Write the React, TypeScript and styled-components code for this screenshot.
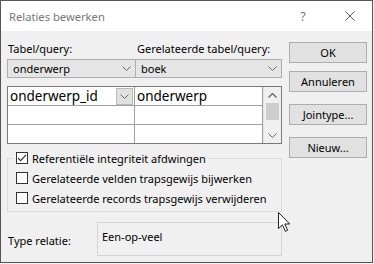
import React from "react";
import styled, { createGlobalStyle } from "styled-components";

const GlobalStyle = createGlobalStyle`
  html, body { margin: 0; padding: 0; background: #f3f3f3; }
  body { font-family: "Noto Sans", "Open Sans", sans-serif; }
  * { box-sizing: border-box; }
`;

const Window = styled.div`
  position: relative;
  width: 373px;
  height: 263px;
  border: 1px solid #555555;
  display: flex;
  flex-direction: column;
  background: #f0f0f0;
  font-family: "Noto Sans", sans-serif;
  font-size: 11px;
  color: #000;
`;

const TitleBar = styled.div`
  height: 30px;
  background: #ffffff;
  display: flex;
  align-items: center;
  padding-left: 8px;
`;

const Title = styled.div`
  flex: 1;
  font-size: 11.2px;
  color: #777777;
  padding-top: 1px;
`;

const HelpGlyph = styled.div`
  width: 12px;
  font-size: 12.5px;
  color: #777777;
  text-align: center;
  margin-right: 36px;
`;

const CloseButton = styled.div`
  width: 10px;
  height: 10px;
  margin-right: 17px;
  display: flex;
`;

const Body = styled.div`
  flex: 1;
  display: flex;
  padding: 10px 0 0 6px;
`;

const LeftColumn = styled.div`
  width: 275px;
  display: flex;
  flex-direction: column;
`;

const TwoCols = styled.div`
  display: grid;
  grid-template-columns: 129px 146px;
`;

const FieldLabel = styled.div<{ $indent?: number }>`
  height: 16px;
  line-height: 16px;
  padding-left: ${(p) => p.$indent ?? 1}px;
  white-space: nowrap;
`;

const ComboRow = styled(TwoCols)`
  margin-top: 2px;
`;

const Combo = styled.div`
  height: 19px;
  border: 1px solid #adadad;
  background: #e5e5e5;
  display: flex;
  align-items: center;
  padding: 0 4px;
  & + & {
    border-left: none;
  }
`;

const ComboText = styled.span`
  flex: 1;
  padding-left: 1px;
`;

const Chevron = ({ color = "#6a6a6a" }: { color?: string }) => (
  <svg width="9" height="5" viewBox="0 0 9 5">
    <polyline points="0.5,0.5 4.5,4.5 8.5,0.5" fill="none" stroke={color} strokeWidth="1" />
  </svg>
);

const ChevronUp = ({ color = "#606060" }: { color?: string }) => (
  <svg width="9" height="5" viewBox="0 0 9 5">
    <polyline points="0.5,4.5 4.5,0.5 8.5,4.5" fill="none" stroke={color} strokeWidth="1.2" />
  </svg>
);

const Table = styled.div`
  margin-top: 8px;
  border: 1px solid #7a7a7a;
  background: #ffffff;
  display: grid;
  grid-template-columns: 127px 128px 18px;
  grid-template-rows: 19px 19px 18px;
`;

const Cell = styled.div<{ $right?: boolean; $bottom?: boolean }>`
  border-right: ${(p) => (p.$right ? "1px solid #a0a0a0" : "none")};
  border-bottom: ${(p) => (p.$bottom ? "1px solid #a0a0a0" : "none")};
  display: flex;
  align-items: center;
  padding-left: 2px;
  font-size: 13.5px;
  white-space: nowrap;
  overflow: hidden;
`;

const CellText = styled.span`
  flex: 1;
`;

const CellDrop = styled.div`
  width: 17px;
  height: 17px;
  margin-right: 1px;
  background: #e1e1e1;
  border: 1px solid #b9b9b9;
  display: flex;
  align-items: center;
  justify-content: center;
`;

const ScrollBar = styled.div`
  grid-column: 3;
  grid-row: 1 / span 3;
  background: #f0f0f0;
  border-left: 1px solid #e4e4e4;
  display: flex;
  flex-direction: column;
  align-items: center;
`;

const ScrollArrow = styled.div`
  height: 16px;
  width: 100%;
  display: flex;
  align-items: center;
  justify-content: center;
`;

const ScrollThumb = styled.div`
  width: 13px;
  height: 17px;
  background: #cdcdcd;
`;

const ScrollTrack = styled.div`
  flex: 1;
`;

const GroupBox = styled.fieldset`
  margin: 7px 0 0 0;
  padding: 3px 0 3px 8px;
  border: 1px solid #dcdcdc;
  min-width: 0;
`;

const Legend = styled.legend`
  padding: 0 2px;
  margin-left: -2px;
  height: 14px;
  display: flex;
  align-items: center;
`;

const CheckRow = styled.label`
  height: 20px;
  display: flex;
  align-items: center;
  white-space: nowrap;
`;

const Box = styled.span`
  width: 12px;
  height: 12px;
  border: 1px solid #333333;
  background: #ffffff;
  margin-right: 4px;
  display: flex;
  flex: none;
`;

const CheckBox = ({ checked }: { checked?: boolean }) => (
  <Box>
    {checked && (
      <svg width="10" height="10" viewBox="0 0 10 10">
        <polyline points="1,5 3.6,7.6 9,2" fill="none" stroke="#333" strokeWidth="1.1" />
      </svg>
    )}
  </Box>
);

const TypeRow = styled.div`
  margin-top: 10px;
  display: flex;
  align-items: flex-start;
`;

const TypeLabel = styled.div`
  width: 90px;
  padding-left: 1px;
  margin-top: 11px;
  line-height: 16px;
`;

const TypeBox = styled.div`
  flex: 1;
  height: 34px;
  border: 1px solid #d5d5d5;
  padding: 6px 4px;
  line-height: 16px;
`;

const RightColumn = styled.div`
  width: 78px;
  margin-left: 7px;
  padding-top: 1px;
  display: flex;
  flex-direction: column;
`;

const Button = styled.div<{ $gap?: number }>`
  height: 21px;
  margin-top: ${(p) => p.$gap ?? 0}px;
  border: 1px solid #adadad;
  background: #e1e1e1;
  display: flex;
  align-items: center;
  justify-content: center;
`;

const Cursor = styled.svg`
  position: absolute;
  left: 277px;
  top: 211px;
`;

export default function App() {
  return (
    <>
      <GlobalStyle />
      <Window>
        <TitleBar>
          <Title>Relaties bewerken</Title>
          <HelpGlyph>?</HelpGlyph>
          <CloseButton>
            <svg width="10" height="10" viewBox="0 0 10 10">
              <line x1="0.5" y1="0.5" x2="9.5" y2="9.5" stroke="#555" strokeWidth="1" />
              <line x1="9.5" y1="0.5" x2="0.5" y2="9.5" stroke="#555" strokeWidth="1" />
            </svg>
          </CloseButton>
        </TitleBar>
        <Body>
          <LeftColumn>
            <TwoCols>
              <FieldLabel>Tabel/query:</FieldLabel>
              <FieldLabel $indent={1}>Gerelateerde tabel/query:</FieldLabel>
            </TwoCols>
            <ComboRow>
              <Combo>
                <ComboText>onderwerp</ComboText>
                <Chevron />
              </Combo>
              <Combo>
                <ComboText>boek</ComboText>
                <Chevron />
              </Combo>
            </ComboRow>
            <Table>
              <Cell $right $bottom>
                <CellText>onderwerp_id</CellText>
                <CellDrop>
                  <Chevron />
                </CellDrop>
              </Cell>
              <Cell $right $bottom>
                <CellText>onderwerp</CellText>
              </Cell>
              <ScrollBar>
                <ScrollArrow>
                  <ChevronUp />
                </ScrollArrow>
                <ScrollThumb />
                <ScrollTrack />
                <ScrollArrow>
                  <Chevron color="#606060" />
                </ScrollArrow>
              </ScrollBar>
              <Cell $right $bottom />
              <Cell $right $bottom />
              <Cell $right />
              <Cell $right />
            </Table>
            <GroupBox>
              <Legend>
                <CheckRow>
                  <CheckBox checked />
                  Referentiële integriteit afdwingen
                </CheckRow>
              </Legend>
              <CheckRow>
                <CheckBox />
                Gerelateerde velden trapsgewijs bijwerken
              </CheckRow>
              <CheckRow>
                <CheckBox />
                Gerelateerde records trapsgewijs verwijderen
              </CheckRow>
            </GroupBox>
            <TypeRow>
              <TypeLabel>Type relatie:</TypeLabel>
              <TypeBox>Een-op-veel</TypeBox>
            </TypeRow>
          </LeftColumn>
          <RightColumn>
            <Button>OK</Button>
            <Button $gap={8}>Annuleren</Button>
            <Button $gap={12}>Jointype...</Button>
            <Button $gap={12}>Nieuw...</Button>
          </RightColumn>
        </Body>
        <Cursor width="13" height="21" viewBox="0 0 13 21">
          <path
            d="M0.5,0.5 L0.5,16.5 L4.5,12.8 L7.3,19.3 L9.6,18.3 L6.9,12 L11.8,12 Z"
            fill="#ffffff"
            stroke="#222"
            strokeWidth="1"
            strokeLinejoin="miter"
          />
        </Cursor>
      </Window>
    </>
  );
}
